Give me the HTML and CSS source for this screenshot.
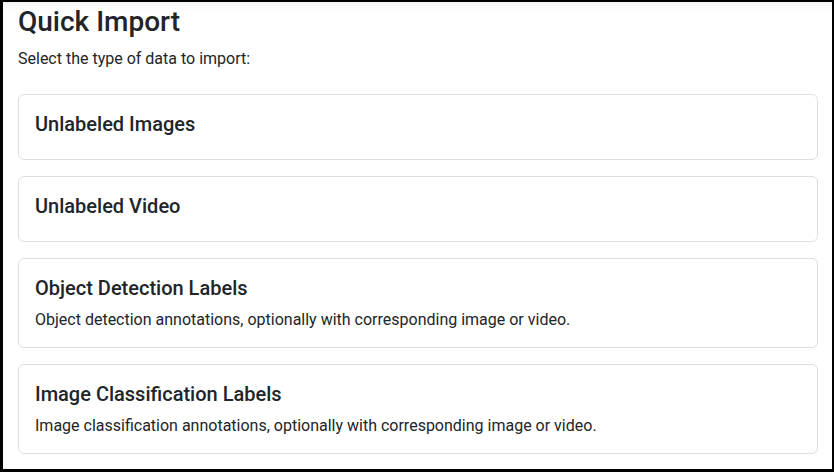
FILE: index.html
```html
<!DOCTYPE html>
<html lang="en">
<head>
<meta charset="utf-8">
<title>Quick Import</title>
<link rel="stylesheet" href="styles.css">
</head>
<body>
<div class="frame">
  <h3 class="page-title">Quick Import</h3>
  <p class="lead-text">Select the type of data to import:</p>
  <div class="cards">
    <div class="card"><div class="card-body"><h5 class="card-title">Unlabeled Images</h5></div></div>
    <div class="card"><div class="card-body"><h5 class="card-title">Unlabeled Video</h5></div></div>
    <div class="card"><div class="card-body"><h5 class="card-title">Object Detection Labels</h5><p class="card-text">Object detection annotations, optionally with corresponding image or video.</p></div></div>
    <div class="card"><div class="card-body"><h5 class="card-title">Image Classification Labels</h5><p class="card-text">Image classification annotations, optionally with corresponding image or video.</p></div></div>
  </div>
</div>
</body>
</html>
```
FILE: styles.css
```css
* { box-sizing: border-box; }
html, body { margin: 0; padding: 0; }
body {
  font-family: Roboto, "Liberation Sans", sans-serif;
  font-size: 16px;
  line-height: 1.5;
  color: #212529;
  background: #000;
}
.frame {
  width: 834px;
  height: 472px;
  overflow: hidden;
  border-style: solid;
  border-color: #000;
  border-width: 2px 2px 3px 3px;
  background: linear-gradient(to bottom, #f6f6f6 0, #ffffff 10px) no-repeat #fff;
  padding: 3px 14px 0 15px;
}
.page-title {
  margin: 0 0 8px;
  font-size: 28px;
  font-weight: 500;
  line-height: 1.2;
}
.lead-text {
  margin: 0 0 23px;
}
.cards {
  display: flex;
  flex-direction: column;
  gap: 16px;
}
.card {
  border: 1px solid #dfdfdf;
  border-radius: 6px;
  background: #fff;
}
.card-body {
  padding: 17px 16px 15px;
}
.card-title {
  margin: 0 0 8px;
  font-size: 20px;
  font-weight: 500;
  line-height: 1.2;
}
.card-text {
  margin: 0;
}
```
